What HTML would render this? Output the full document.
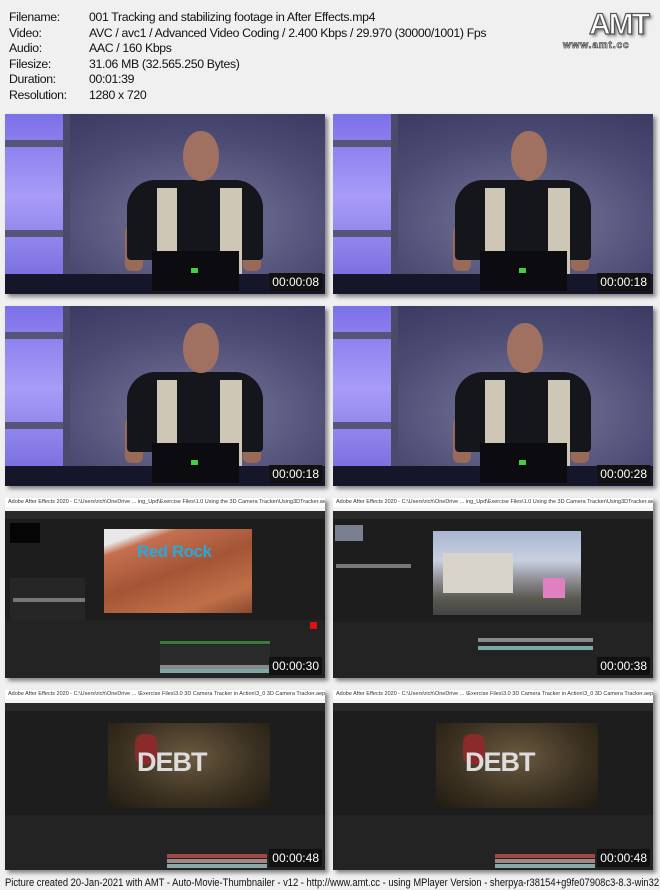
<!DOCTYPE html>
<html><head><meta charset="utf-8"><style>
*{margin:0;padding:0;box-sizing:border-box}
body{width:660px;height:890px;background:#f0f0f0;position:relative;overflow:hidden;font-family:"Liberation Sans",sans-serif}
.info{position:absolute;left:9px;top:10px;font-size:12.3px;line-height:15.6px;color:#111;letter-spacing:-0.35px}
.info div{white-space:nowrap}
.info span{display:inline-block;width:80px}
.logo{position:absolute;left:589px;top:8px;font-size:30px;font-weight:bold;color:#fff;-webkit-text-stroke:1.2px #555;text-shadow:2px 2px 3px #666;letter-spacing:-2px}
.url{position:absolute;left:563px;top:40px;font-size:10px;font-weight:bold;color:#fff;-webkit-text-stroke:0.8px #555;letter-spacing:0.9px}
.f{position:absolute;width:320px;height:180px;overflow:hidden;box-shadow:3px 3px 4px rgba(0,0,0,0.45)}
.f div{position:absolute}
.ts{right:3px;bottom:3px;background:#111;color:#fff;font-size:12px;padding:2px 3px;line-height:14px}
.foot{position:absolute;left:5px;top:877px;font-size:10.6px;color:#111;white-space:nowrap;transform-origin:0 0;transform:scaleX(0.885)}
</style></head><body>
<div class="info">
<div><span>Filename:</span>001 Tracking and stabilizing footage in After Effects.mp4</div>
<div><span>Video:</span>AVC / avc1 / Advanced Video Coding / 2.400 Kbps / 29.970 (30000/1001) Fps</div>
<div><span>Audio:</span>AAC / 160 Kbps</div>
<div><span>Filesize:</span>31.06 MB (32.565.250 Bytes)</div>
<div><span>Duration:</span>00:01:39</div>
<div><span>Resolution:</span>1280 x 720</div>
</div>
<div class="logo">AMT</div>
<div class="url">www.amt.cc</div>

<div class="f" style="left:5px;top:114px">
<div style="inset:0;background:radial-gradient(ellipse at 60% 60%,#7a7aa0,#4a4a72 55%,#33335a)"></div>
<div style="left:0;top:0;width:58px;height:165px;background:linear-gradient(#7c70e8,#a89cf8 50%,#7a6ee0)"></div>
<div style="left:0;top:26px;width:62px;height:7px;background:#55557a"></div>
<div style="left:0;top:116px;width:62px;height:7px;background:#55557a"></div>
<div style="left:58px;top:0;width:7px;height:165px;background:#4a4a6a"></div>
<div style="left:120px;top:112px;width:18px;height:45px;background:#9a6a58;border-radius:6px"></div>
<div style="left:238px;top:112px;width:18px;height:45px;background:#9a6a58;border-radius:6px"></div>
<div style="left:122px;top:66px;width:136px;height:80px;background:#15151c;border-radius:28px 28px 4px 4px"></div>
<div style="left:152px;top:74px;width:20px;height:90px;background:#cfc7b5"></div>
<div style="left:215px;top:74px;width:22px;height:90px;background:#cfc7b5"></div>
<div style="left:178px;top:17px;width:36px;height:50px;background:#a07060;border-radius:48%"></div>
<div style="left:0;top:160px;width:320px;height:20px;background:#16162a"></div>
<div style="left:147px;top:137px;width:87px;height:40px;background:#0c0c10"></div>
<div style="left:186px;top:154px;width:7px;height:5px;background:#4c4"></div>
<div class="ts">00:00:08</div>
</div>

<div class="f" style="left:333px;top:114px">
<div style="inset:0;background:radial-gradient(ellipse at 60% 60%,#7a7aa0,#4a4a72 55%,#33335a)"></div>
<div style="left:0;top:0;width:58px;height:165px;background:linear-gradient(#7c70e8,#a89cf8 50%,#7a6ee0)"></div>
<div style="left:0;top:26px;width:62px;height:7px;background:#55557a"></div>
<div style="left:0;top:116px;width:62px;height:7px;background:#55557a"></div>
<div style="left:58px;top:0;width:7px;height:165px;background:#4a4a6a"></div>
<div style="left:120px;top:112px;width:18px;height:45px;background:#9a6a58;border-radius:6px"></div>
<div style="left:238px;top:112px;width:18px;height:45px;background:#9a6a58;border-radius:6px"></div>
<div style="left:122px;top:66px;width:136px;height:80px;background:#15151c;border-radius:28px 28px 4px 4px"></div>
<div style="left:152px;top:74px;width:20px;height:90px;background:#cfc7b5"></div>
<div style="left:215px;top:74px;width:22px;height:90px;background:#cfc7b5"></div>
<div style="left:178px;top:17px;width:36px;height:50px;background:#a07060;border-radius:48%"></div>
<div style="left:0;top:160px;width:320px;height:20px;background:#16162a"></div>
<div style="left:147px;top:137px;width:87px;height:40px;background:#0c0c10"></div>
<div style="left:186px;top:154px;width:7px;height:5px;background:#4c4"></div>
<div class="ts">00:00:18</div>
</div>

<div class="f" style="left:5px;top:306px">
<div style="inset:0;background:radial-gradient(ellipse at 60% 60%,#7a7aa0,#4a4a72 55%,#33335a)"></div>
<div style="left:0;top:0;width:58px;height:165px;background:linear-gradient(#7c70e8,#a89cf8 50%,#7a6ee0)"></div>
<div style="left:0;top:26px;width:62px;height:7px;background:#55557a"></div>
<div style="left:0;top:116px;width:62px;height:7px;background:#55557a"></div>
<div style="left:58px;top:0;width:7px;height:165px;background:#4a4a6a"></div>
<div style="left:120px;top:112px;width:18px;height:45px;background:#9a6a58;border-radius:6px"></div>
<div style="left:238px;top:112px;width:18px;height:45px;background:#9a6a58;border-radius:6px"></div>
<div style="left:122px;top:66px;width:136px;height:80px;background:#15151c;border-radius:28px 28px 4px 4px"></div>
<div style="left:152px;top:74px;width:20px;height:90px;background:#cfc7b5"></div>
<div style="left:215px;top:74px;width:22px;height:90px;background:#cfc7b5"></div>
<div style="left:178px;top:17px;width:36px;height:50px;background:#a07060;border-radius:48%"></div>
<div style="left:0;top:160px;width:320px;height:20px;background:#16162a"></div>
<div style="left:147px;top:137px;width:87px;height:40px;background:#0c0c10"></div>
<div style="left:186px;top:154px;width:7px;height:5px;background:#4c4"></div>
<div class="ts">00:00:18</div>
</div>

<div class="f" style="left:333px;top:306px">
<div style="inset:0;background:radial-gradient(ellipse at 60% 60%,#7a7aa0,#4a4a72 55%,#33335a)"></div>
<div style="left:0;top:0;width:58px;height:165px;background:linear-gradient(#7c70e8,#a89cf8 50%,#7a6ee0)"></div>
<div style="left:0;top:26px;width:62px;height:7px;background:#55557a"></div>
<div style="left:0;top:116px;width:62px;height:7px;background:#55557a"></div>
<div style="left:58px;top:0;width:7px;height:165px;background:#4a4a6a"></div>
<div style="left:120px;top:112px;width:18px;height:45px;background:#9a6a58;border-radius:6px"></div>
<div style="left:238px;top:112px;width:18px;height:45px;background:#9a6a58;border-radius:6px"></div>
<div style="left:122px;top:66px;width:136px;height:80px;background:#15151c;border-radius:28px 28px 4px 4px"></div>
<div style="left:152px;top:74px;width:20px;height:90px;background:#cfc7b5"></div>
<div style="left:215px;top:74px;width:22px;height:90px;background:#cfc7b5"></div>
<div style="left:174px;top:17px;width:36px;height:50px;background:#a07060;border-radius:48%"></div>
<div style="left:0;top:160px;width:320px;height:20px;background:#16162a"></div>
<div style="left:147px;top:137px;width:87px;height:40px;background:#0c0c10"></div>
<div style="left:186px;top:154px;width:7px;height:5px;background:#4c4"></div>
<div class="ts">00:00:28</div>
</div>

<div class="f" style="left:5px;top:498px;background:#1d1d1d">
<div style="left:0;top:0;width:320px;height:9px;background:#fff;font-size:5.5px;line-height:9px;color:#333;padding-left:3px;white-space:nowrap">Adobe After Effects 2020 - C:\Users\rich\OneDrive ... ing_Upd\Exercise Files\1.0 Using the 3D Camera Tracker\Using3DTracker.aep *</div>
<div style="left:0;top:9px;width:320px;height:4px;background:#f4f4f4"></div>
<div style="left:0;top:13px;width:320px;height:8px;background:#2a2a2a"></div>
<div style="left:5px;top:25px;width:30px;height:20px;background:#050505"></div>
<div style="left:5px;top:80px;width:75px;height:50px;background:#262626"></div>
<div style="left:8px;top:100px;width:72px;height:4px;background:#777"></div>
<div style="left:99px;top:31px;width:148px;height:84px;background:linear-gradient(160deg,#e8e8e8 0 12%,#c57050 20%,#a35536 50%,#c07048 80%,#8a4a30)"></div>
<div style="left:132px;top:44px;font-size:17px;font-weight:bold;color:#2aa8d8;letter-spacing:-0.5px">Red Rock</div>
<div style="left:0;top:122px;width:320px;height:58px;background:#232323"></div>
<div style="left:155px;top:143px;width:110px;height:3px;background:#3a7a3a"></div>
<div style="left:155px;top:147px;width:110px;height:20px;background:#2b2b2b"></div>
<div style="left:155px;top:167px;width:110px;height:4px;background:#8a8a8a"></div>
<div style="left:155px;top:171px;width:110px;height:4px;background:#7aa8a8"></div>
<div style="left:305px;top:124px;width:7px;height:7px;background:#e01010"></div>
<div class="ts">00:00:30</div>
</div>

<div class="f" style="left:333px;top:498px;background:#1d1d1d">
<div style="left:0;top:0;width:320px;height:9px;background:#fff;font-size:5.5px;line-height:9px;color:#333;padding-left:3px;white-space:nowrap">Adobe After Effects 2020 - C:\Users\rich\OneDrive ... ing_Upd\Exercise Files\1.0 Using the 3D Camera Tracker\Using3DTracker.aep *</div>
<div style="left:0;top:9px;width:320px;height:4px;background:#f4f4f4"></div>
<div style="left:0;top:13px;width:320px;height:8px;background:#2a2a2a"></div>
<div style="left:2px;top:27px;width:28px;height:16px;background:#7a8090"></div>
<div style="left:3px;top:66px;width:75px;height:4px;background:#777"></div>
<div style="left:100px;top:33px;width:148px;height:84px;background:linear-gradient(#a8b8d0 0,#c8d0e0 35%,#8a8a90 60%,#5a5a50 80%,#444)"></div>
<div style="left:110px;top:55px;width:70px;height:40px;background:#d8d4cc"></div>
<div style="left:210px;top:80px;width:22px;height:20px;background:#e080c0"></div>
<div style="left:0;top:124px;width:320px;height:56px;background:#232323"></div>
<div style="left:145px;top:140px;width:115px;height:4px;background:#8a8a8a"></div>
<div style="left:145px;top:148px;width:115px;height:4px;background:#7aa8a8"></div>
<div class="ts">00:00:38</div>
</div>

<div class="f" style="left:5px;top:690px;background:#1d1d1d">
<div style="left:0;top:0;width:320px;height:9px;background:#fff;font-size:5.5px;line-height:9px;color:#333;padding-left:3px;white-space:nowrap">Adobe After Effects 2020 - C:\Users\rich\OneDrive ... \Exercise Files\3.0 3D Camera Tracker in Action\3_0 3D Camera Tracker.aep *</div>
<div style="left:0;top:9px;width:320px;height:4px;background:#f4f4f4"></div>
<div style="left:0;top:13px;width:320px;height:8px;background:#2a2a2a"></div>
<div style="left:103px;top:33px;width:162px;height:85px;background:radial-gradient(ellipse at 50% 40%,#6a5a40,#3a3020 60%,#201a12)"></div>
<div style="left:130px;top:44px;width:22px;height:30px;background:#8a2a2a;border-radius:8px"></div>
<div style="left:132px;top:57px;font-size:27px;font-weight:bold;color:#ddd;letter-spacing:-1px">DEBT</div>
<div style="left:0;top:125px;width:320px;height:55px;background:#232323"></div>
<div style="left:162px;top:164px;width:100px;height:4px;background:#a04848"></div>
<div style="left:162px;top:169px;width:100px;height:4px;background:#a08888"></div>
<div style="left:162px;top:174px;width:100px;height:4px;background:#8aa8a8"></div>
<div class="ts">00:00:48</div>
</div>

<div class="f" style="left:333px;top:690px;background:#1d1d1d">
<div style="left:0;top:0;width:320px;height:9px;background:#fff;font-size:5.5px;line-height:9px;color:#333;padding-left:3px;white-space:nowrap">Adobe After Effects 2020 - C:\Users\rich\OneDrive ... \Exercise Files\3.0 3D Camera Tracker in Action\3_0 3D Camera Tracker.aep *</div>
<div style="left:0;top:9px;width:320px;height:4px;background:#f4f4f4"></div>
<div style="left:0;top:13px;width:320px;height:8px;background:#2a2a2a"></div>
<div style="left:103px;top:33px;width:162px;height:85px;background:radial-gradient(ellipse at 50% 40%,#6a5a40,#3a3020 60%,#201a12)"></div>
<div style="left:130px;top:44px;width:22px;height:30px;background:#8a2a2a;border-radius:8px"></div>
<div style="left:132px;top:57px;font-size:27px;font-weight:bold;color:#ddd;letter-spacing:-1px">DEBT</div>
<div style="left:0;top:125px;width:320px;height:55px;background:#232323"></div>
<div style="left:162px;top:164px;width:100px;height:4px;background:#a04848"></div>
<div style="left:162px;top:169px;width:100px;height:4px;background:#a08888"></div>
<div style="left:162px;top:174px;width:100px;height:4px;background:#8aa8a8"></div>
<div class="ts">00:00:48</div>
</div>

<div class="foot">Picture created 20-Jan-2021 with AMT - Auto-Movie-Thumbnailer - v12 - http://www.amt.cc - using MPlayer Version - sherpya-r38154+g9fe07908c3-8.3-win32</div>
</body></html>
